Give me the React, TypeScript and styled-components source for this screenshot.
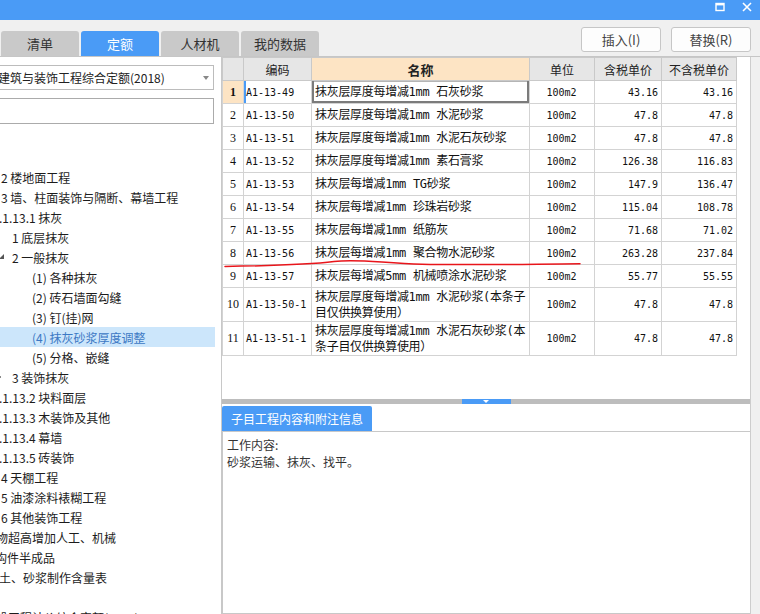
import React from "react";
import styled, { createGlobalStyle } from "styled-components";

const GlobalStyle = createGlobalStyle`
  html, body {
    margin: 0;
    padding: 0;
  }
  body {
    background: #f0f0f0;
    font-family: "Noto Sans CJK SC", "Liberation Sans", sans-serif;
    font-size: 12px;
    color: #222;
  }
`;

const BLUE = "#4a9bf6";

const Window = styled.div`
  width: 760px;
  height: 614px;
  overflow: hidden;
  display: flex;
  flex-direction: column;
  background: #f0f0f0;
`;

const TitleBar = styled.div`
  height: 20px;
  flex: none;
  box-sizing: border-box;
  background: ${BLUE};
  display: flex;
  justify-content: flex-end;
  align-items: flex-start;
  gap: 17px;
  padding: 2px 8px 0 0;
`;

const Toolbar = styled.div`
  height: 36px;
  flex: none;
  display: flex;
`;

const TabStrip = styled.div`
  display: flex;
  align-self: flex-end;
  gap: 2px;
  padding-left: 1px;
`;

const Tab = styled.div<{ $active?: boolean }>`
  width: 78px;
  height: 25px;
  border-radius: 3px 3px 0 0;
  background: ${(p) => (p.$active ? BLUE : "#c9c9c9")};
  color: ${(p) => (p.$active ? "#fff" : "#333")};
  font-size: 13px;
  display: flex;
  align-items: center;
  justify-content: center;
`;

const ButtonGroup = styled.div`
  margin-left: auto;
  margin-top: 7px;
  padding-right: 9px;
  display: flex;
  gap: 10px;
`;

const Button = styled.div`
  width: 80px;
  height: 25px;
  box-sizing: border-box;
  background: #fdfdfd;
  border: 1px solid #c6c6c6;
  border-radius: 3px;
  color: #444;
  font-size: 13px;
  display: flex;
  align-items: center;
  justify-content: center;
`;

const Main = styled.div`
  flex: 1;
  min-height: 0;
  display: flex;
  border-top: 1px solid #c6c6c6;
`;

const LeftPanel = styled.div`
  width: 222px;
  flex: none;
  box-sizing: border-box;
  background: #fff;
  border-right: 1px solid #c8c8c8;
  overflow: hidden;
  padding-top: 8px;
`;

const Select = styled.div`
  margin-left: -6px;
  width: 220px;
  height: 25px;
  box-sizing: border-box;
  border: 1px solid #bcbcbc;
  display: flex;
  align-items: center;
  padding: 0 3px 0 3px;
  white-space: nowrap;
  font-size: 12px;
  color: #222;
`;

const SelectArrow = styled.span`
  margin-left: auto;
  width: 0;
  height: 0;
  border-left: 3px solid transparent;
  border-right: 3px solid transparent;
  border-top: 4px solid #888;
  margin-right: 1px;
`;

const Search = styled.div`
  margin: 8px 0 0 -6px;
  width: 220px;
  height: 26px;
  box-sizing: border-box;
  border: 1px solid #ababab;
  background: #fff;
`;

const Tree = styled.div`
  margin-top: 3px;
  width: 215px;
`;

const TreeRow = styled.div<{ $selected?: boolean }>`
  height: 20px;
  display: flex;
  align-items: center;
  white-space: nowrap;
  background: ${(p) => (p.$selected ? "#cce6fb" : "transparent")};
  color: ${(p) => (p.$selected ? "#3b78c4" : "#1c1c1c")};
  font-size: 12px;
`;

const Gutter = styled.span<{ $w: number }>`
  width: ${(p) => p.$w}px;
  flex: none;
  display: flex;
  align-items: center;
`;

const Label = styled.span<{ $shift: number }>`
  margin-left: ${(p) => p.$shift}px;
`;

const RightPanel = styled.div`
  flex: 1;
  margin-right: 9px;
  min-width: 0;
  display: flex;
  flex-direction: column;
  background: #fff;
  border-right: 1px solid #cdcdcd;
`;

const TableArea = styled.div`
  height: 342px;
  flex: none;
  position: relative;
`;

const Grid = styled.table`
  border-collapse: collapse;
  table-layout: fixed;
  width: 514px;
`;

const HeadCell = styled.th<{ $accent?: boolean }>`
  height: 22px;
  padding: 0;
  border: 1px solid #c9c9c9;
  background: ${(p) => (p.$accent ? "#fde4c4" : "#e6e6e6")};
  font-family: "Noto Sans CJK SC", sans-serif;
  font-size: ${(p) => (p.$accent ? "13px" : "12px")};
  font-weight: ${(p) => (p.$accent ? 700 : 400)};
  color: #222;
  text-align: center;
`;

const Row = styled.tr<{ $tall?: boolean }>`
  height: ${(p) => (p.$tall ? 34 : 23)}px;
`;

const Cell = styled.td<{ $align?: "left" | "center" | "right" }>`
  padding: 0 3px 0 2px;
  border: 1px solid #d3d3d3;
  background: #fff;
  text-align: ${(p) => p.$align ?? "left"};
  vertical-align: middle;
  font-family: "DejaVu Sans Mono", monospace;
  font-size: 10px;
  color: #111;
  white-space: nowrap;
`;

const NoCell = styled(Cell)<{ $current?: boolean }>`
  padding: 0;
  text-align: center;
  font-family: "Liberation Serif", serif;
  font-size: 12px;
  font-weight: ${(p) => (p.$current ? 700 : 400)};
  background: ${(p) => (p.$current ? "#fde4c4" : "#fff")};
`;

const CodeCell = styled(Cell)<{ $current?: boolean }>`
  box-shadow: ${(p) => (p.$current ? `inset 2px 0 0 ${BLUE}` : "none")};
`;

const NameCell = styled(Cell)<{ $current?: boolean }>`
  padding: 0 1px 0 3px;
  font-family: "DejaVu Sans Mono", "Noto Sans CJK SC", monospace;
  font-size: 12px;
  letter-spacing: -0.3px;
  line-height: 16px;
  white-space: normal;
  box-shadow: ${(p) =>
    p.$current
      ? "inset 2px 0 0 #7b7b7b, inset -2px 0 0 #7b7b7b, inset 0 -2px 0 #7b7b7b, inset 0 1px 0 #b5b5b5"
      : "none"};
`;

const Annotation = styled.svg`
  position: absolute;
  left: 0;
  top: 0;
  pointer-events: none;
`;

const Splitter = styled.div`
  height: 5px;
  flex: none;
  background: #bdbdbd;
  display: flex;
  justify-content: center;
`;

const SplitHandle = styled.div`
  width: 49px;
  background: ${BLUE};
  display: flex;
  justify-content: center;
  align-items: flex-start;
  &::after {
    content: "";
    border-left: 3px solid transparent;
    border-right: 3px solid transparent;
    border-top: 3px solid #fff;
    margin-top: 1px;
  }
`;

const InfoTabs = styled.div`
  padding-top: 2px;
  flex: none;
  display: flex;
`;

const InfoTab = styled.div`
  width: 150px;
  height: 25px;
  border-radius: 2px 2px 0 0;
  background: ${BLUE};
  color: #fff;
  font-size: 12px;
  display: flex;
  align-items: center;
  justify-content: center;
`;

const InfoBox = styled.div`
  flex: 1;
  border: 1px solid #c8c8c8;
  border-right: none;
  padding: 4px 4px;
  font-size: 12px;
  line-height: 17px;
  color: #333;
`;

type Node = {
  text?: string;
  indent: number;
  toggle?: "open" | "closed";
  frag?: boolean;
  selected?: boolean;
};

const tree: Node[] = [
  { frag: true, indent: 0 },
  { frag: true, indent: 0 },
  { text: "2 楼地面工程", indent: 1 },
  { text: "3 墙、柱面装饰与隔断、幕墙工程", indent: 1 },
  { text: ".1.13.1 抹灰", indent: -1 },
  { text: "1 底层抹灰", indent: 12 },
  { text: "2 一般抹灰", indent: 12, toggle: "open" },
  { text: "(1) 各种抹灰", indent: 32 },
  { text: "(2) 砖石墙面勾缝", indent: 32 },
  { text: "(3) 钉(挂)网", indent: 32 },
  { text: "(4) 抹灰砂浆厚度调整", indent: 32, selected: true },
  { text: "(5) 分格、嵌缝", indent: 32 },
  { text: "3 装饰抹灰", indent: 12, toggle: "closed" },
  { text: ".1.13.2 块料面层", indent: -1 },
  { text: ".1.13.3 木装饰及其他", indent: -1 },
  { text: ".1.13.4 幕墙", indent: -1 },
  { text: ".1.13.5 砖装饰", indent: -1 },
  { text: "4 天棚工程", indent: 1 },
  { text: "5 油漆涂料裱糊工程", indent: 1 },
  { text: "6 其他装饰工程", indent: 1 },
  { text: "物超高增加人工、机械", indent: -4 },
  { text: "构件半成品", indent: -5 },
  { text: "土、砂浆制作含量表", indent: -1 },
  { frag: true, indent: 0 },
  { text: "设工程计价综合定额(2018)", indent: -4 },
];

type Item = {
  no: number;
  code: string;
  name: string;
  unit: string;
  tax: string;
  net: string;
  tall?: boolean;
};

const items: Item[] = [
  { no: 1, code: "A1-13-49", name: "抹灰层厚度每增减1mm 石灰砂浆", unit: "100m2", tax: "43.16", net: "43.16" },
  { no: 2, code: "A1-13-50", name: "抹灰层厚度每增减1mm 水泥砂浆", unit: "100m2", tax: "47.8", net: "47.8" },
  { no: 3, code: "A1-13-51", name: "抹灰层厚度每增减1mm 水泥石灰砂浆", unit: "100m2", tax: "47.8", net: "47.8" },
  { no: 4, code: "A1-13-52", name: "抹灰层厚度每增减1mm 素石膏浆", unit: "100m2", tax: "126.38", net: "116.83" },
  { no: 5, code: "A1-13-53", name: "抹灰层每增减1mm TG砂浆", unit: "100m2", tax: "147.9", net: "136.47" },
  { no: 6, code: "A1-13-54", name: "抹灰层每增减1mm 珍珠岩砂浆", unit: "100m2", tax: "115.04", net: "108.78" },
  { no: 7, code: "A1-13-55", name: "抹灰层每增减1mm 纸筋灰", unit: "100m2", tax: "71.68", net: "71.02" },
  { no: 8, code: "A1-13-56", name: "抹灰层每增减1mm 聚合物水泥砂浆", unit: "100m2", tax: "263.28", net: "237.84" },
  { no: 9, code: "A1-13-57", name: "抹灰层每增减5mm 机械喷涂水泥砂浆", unit: "100m2", tax: "55.77", net: "55.55" },
  {
    no: 10,
    code: "A1-13-50-1",
    name: "抹灰层厚度每增减1mm 水泥砂浆(本条子目仅供换算使用）",
    unit: "100m2",
    tax: "47.8",
    net: "47.8",
    tall: true,
  },
  {
    no: 11,
    code: "A1-13-51-1",
    name: "抹灰层厚度每增减1mm 水泥石灰砂浆(本条子目仅供换算使用）",
    unit: "100m2",
    tax: "47.8",
    net: "47.8",
    tall: true,
  },
];

function Toggle({ kind }: { kind?: "open" | "closed" }) {
  if (kind === "open")
    return (
      <svg width="6" height="6" style={{ marginLeft: -1 }}>
        <polygon points="5,0 5,5 0,5" fill="#555" />
      </svg>
    );
  if (kind === "closed")
    return (
      <svg width="6" height="8" style={{ marginLeft: -3 }}>
        <polyline points="0.5,0.5 4,4 0.5,7.5" fill="none" stroke="#8a8a8a" />
      </svg>
    );
  return null;
}

function Fragment() {
  return (
    <svg width="3" height="12">
      <rect x="0" y="0" width="3" height="5" fill="#9ad8f7" />
      <rect x="0" y="6" width="2" height="1" fill="#5a8fd8" />
      <rect x="0" y="8" width="2" height="1" fill="#2f6fcf" />
      <rect x="0" y="10" width="2" height="1" fill="#1f5dbf" />
    </svg>
  );
}

function App() {
  return (
    <>
      <GlobalStyle />
      <Window>
        <TitleBar>
          <svg width="10" height="10" viewBox="0 0 10 10">
            <rect x="1" y="1.5" width="8" height="7" fill="none" stroke="#fff" strokeWidth="1.4" />
            <rect x="1" y="1" width="8" height="2.4" fill="#fff" />
          </svg>
          <svg width="10" height="10" viewBox="0 0 10 10">
            <path d="M1 1 L9 9 M9 1 L1 9" stroke="#fff" strokeWidth="1.6" />
          </svg>
        </TitleBar>

        <Toolbar>
          <TabStrip>
            <Tab>清单</Tab>
            <Tab $active>定额</Tab>
            <Tab>人材机</Tab>
            <Tab>我的数据</Tab>
          </TabStrip>
          <ButtonGroup>
            <Button>插入(I)</Button>
            <Button>替换(R)</Button>
          </ButtonGroup>
        </Toolbar>

        <Main>
          <LeftPanel>
            <Select>
              建筑与装饰工程综合定额(2018)
              <SelectArrow />
            </Select>
            <Search />
            <Tree>
              {tree.map((n, i) => (
                <TreeRow key={i} $selected={n.selected}>
                  <Gutter $w={Math.max(0, n.indent)}>
                    {n.frag ? <Fragment /> : <Toggle kind={n.toggle} />}
                  </Gutter>
                  {n.text && <Label $shift={Math.min(0, n.indent)}>{n.text}</Label>}
                </TreeRow>
              ))}
            </Tree>
          </LeftPanel>

          <RightPanel>
            <TableArea>
              <Grid>
                <colgroup>
                  <col style={{ width: 21 }} />
                  <col style={{ width: 68 }} />
                  <col style={{ width: 218 }} />
                  <col style={{ width: 65 }} />
                  <col style={{ width: 67 }} />
                  <col style={{ width: 75 }} />
                </colgroup>
                <thead>
                  <Row>
                    <HeadCell />
                    <HeadCell>编码</HeadCell>
                    <HeadCell $accent>名称</HeadCell>
                    <HeadCell>单位</HeadCell>
                    <HeadCell>含税单价</HeadCell>
                    <HeadCell>不含税单价</HeadCell>
                  </Row>
                </thead>
                <tbody>
                  {items.map((it) => {
                    const current = it.no === 1;
                    return (
                      <Row key={it.no} $tall={it.tall}>
                        <NoCell $current={current}>{it.no}</NoCell>
                        <CodeCell $current={current}>{it.code}</CodeCell>
                        <NameCell $current={current}>{it.name}</NameCell>
                        <Cell $align="center">{it.unit}</Cell>
                        <Cell $align="right">{it.tax}</Cell>
                        <Cell $align="right">{it.net}</Cell>
                      </Row>
                    );
                  })}
                </tbody>
              </Grid>
              <Annotation width="400" height="230">
                <path
                  d="M3 209.5 C 45 208.8, 88 207.5, 112 204.5 S 160 206.2, 200 207.2 S 300 207.2, 358 206.8"
                  fill="none"
                  stroke="#e8151b"
                  strokeWidth="1.5"
                  strokeLinecap="round"
                />
              </Annotation>
            </TableArea>

            <Splitter>
              <SplitHandle />
            </Splitter>

            <InfoTabs>
              <InfoTab>子目工程内容和附注信息</InfoTab>
            </InfoTabs>
            <InfoBox>
              工作内容:
              <br />
              砂浆运输、抹灰、找平。
            </InfoBox>
          </RightPanel>
        </Main>
      </Window>
    </>
  );
}

export default App;
